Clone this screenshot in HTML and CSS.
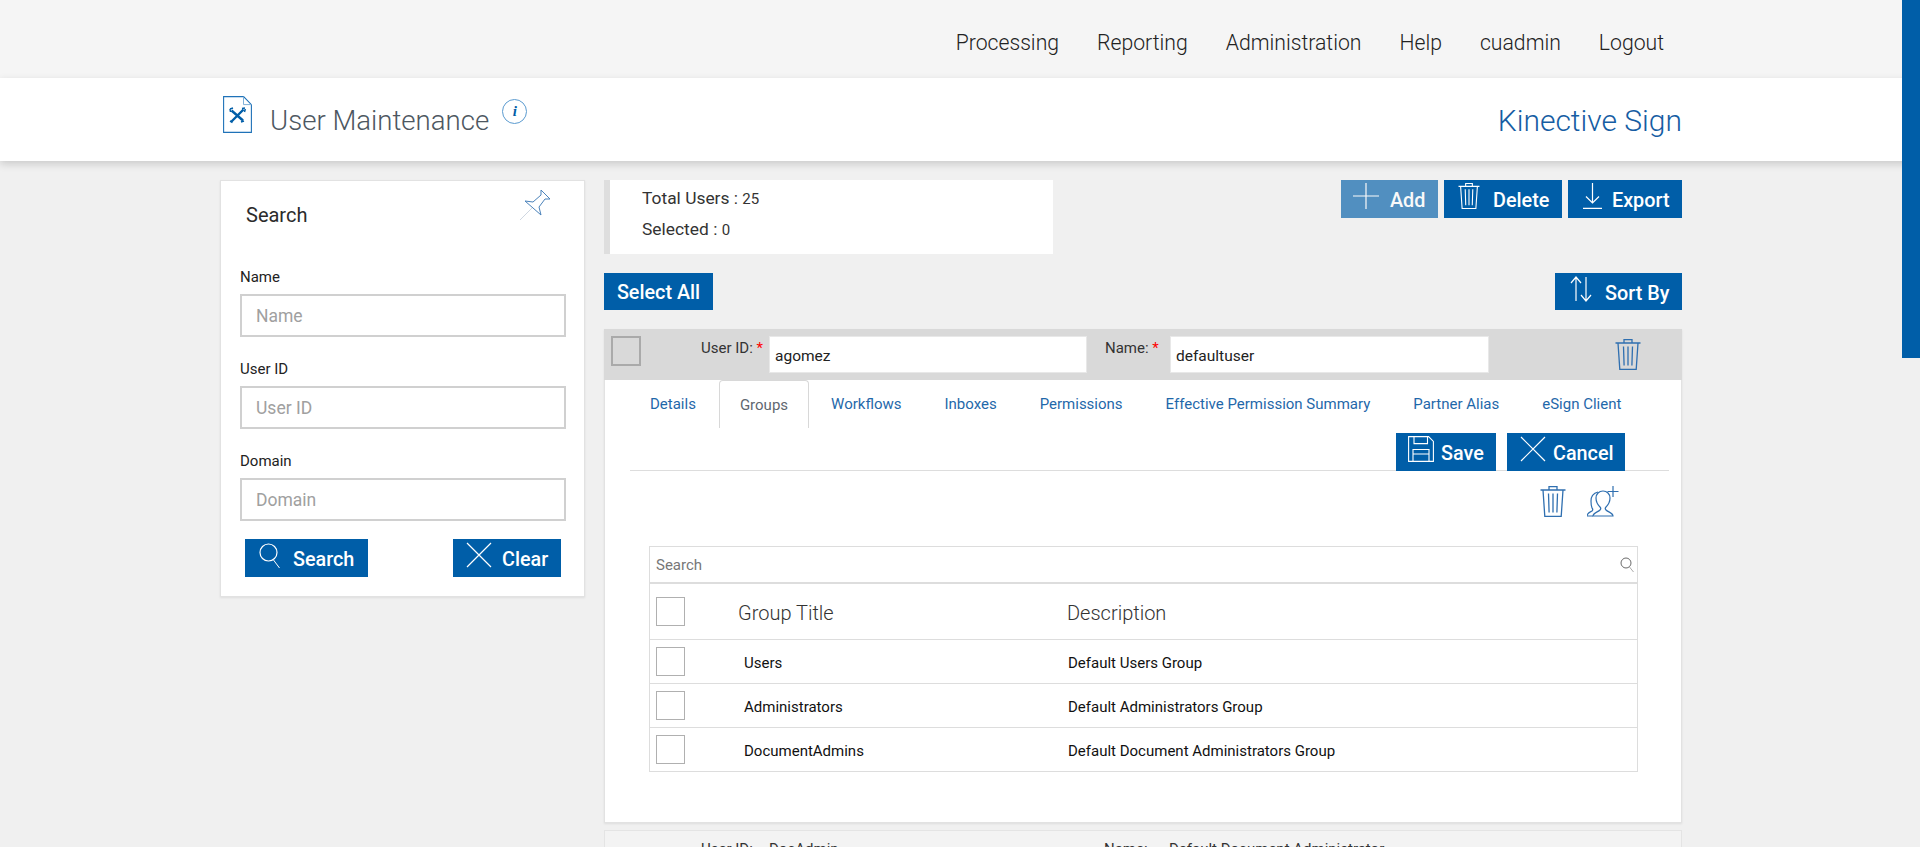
FILE: index.html
```html
<!DOCTYPE html>
<html lang="en">
<head>
<meta charset="utf-8">
<title>User Maintenance</title>
<link rel="stylesheet" href="styles.css">
</head>
<body>
<svg class="defs" width="0" height="0" aria-hidden="true">
  <symbol id="i-trash" viewBox="0 0 26 31"><path d="M.5 4h25M9 4V.6h8V4M3 4l1.800 26.400h16.400L23 4M8.500 7.500l.6 19M13 7.500v19M17.500 7.500l-.6 19" fill="none" stroke="currentColor" stroke-width="1.300"/></symbol>
  <symbol id="i-plus" viewBox="0 0 26 26"><path d="M13 0v26M0 13h26" fill="none" stroke="currentColor" stroke-width="1.200"/></symbol>
  <symbol id="i-x" viewBox="0 0 26 26"><path d="M1 1l24 24M25 1L1 25" fill="none" stroke="currentColor" stroke-width="1.200"/></symbol>
  <symbol id="i-export" viewBox="0 0 19 26"><path d="M9.500 0v20M3 13.500L9.500 20 16 13.500M0 25.400h19" fill="none" stroke="currentColor" stroke-width="1.200"/></symbol>
  <symbol id="i-sort" viewBox="0 0 22 26"><path d="M6 25V1M1 7l5-6 5 6M16 1v24M11 19l5 6 5-6" fill="none" stroke="currentColor" stroke-width="1.200"/></symbol>
  <symbol id="i-search" viewBox="0 0 21 25"><circle cx="9.500" cy="9.500" r="8.500" fill="none" stroke="currentColor" stroke-width="1.200"/><path d="M14.500 17l6 8" fill="none" stroke="currentColor" stroke-width="1"/></symbol>
  <symbol id="i-save" viewBox="0 0 26 26"><path d="M.6.600h20l4.800 4.800v20H.6zM6 .6v7h13.500v-7M5 25.400V13.500h16v11.900M5 18h16" fill="none" stroke="currentColor" stroke-width="1.100"/></symbol>
  <symbol id="i-pin" viewBox="0 0 32 32"><path d="M21 1l9 9h-5l-6 8 2 8L5 12l8 1 8-7z" fill="#fff" stroke="#4a82ba" stroke-width="1"/><path d="M12 19L0 31" fill="none" stroke="#c9d3de" stroke-width=".9"/></symbol>
  <symbol id="i-doc" viewBox="0 0 29 37"><path d="M.6.600h20l7.800 8v27.800H.6z" fill="#fff" stroke="#1f72b8" stroke-width="1.100"/><path d="M20.500.6v8h8" fill="none" stroke="#7fb0d8"/><path d="M8.500 14.500l11.500 10M20.500 13.500L8.500 25.500" fill="none" stroke="#005ea8" stroke-width="2.400"/><path d="M19 12.500l3-.5M21.500 16l.8-3M7 13l3-1M7 13l.5 3M7 25l2.500 1.500M18 26l3-1" fill="none" stroke="#005ea8" stroke-width="1.500"/></symbol>
  <symbol id="i-useradd" viewBox="0 0 32 31"><path d="M6 30c0-3 5-4 7-6 1-1 1-2 0-3-2-2-4-4-4-9 0-4 3-7 7-7s7 3 7 7c0 5-2 7-4 9-1 1-1 2 0 3 2 2 7 3 7 6z" fill="none" stroke="#2f6fb0" stroke-width="1.200"/><path d="M6 30H0c0-3 3-4 5-5 1-1 1-2 0-3-1-2-1-4-1-7 0-5 3-8 7-9" fill="none" stroke="#2f6fb0" stroke-width="1.200"/><path d="M26 0v11M20.500 5.500h11" fill="none" stroke="#2f6fb0" stroke-width="1.200"/></symbol>
  <symbol id="i-mag" viewBox="0 0 14 16"><circle cx="6" cy="6" r="5" fill="none" stroke="#6b6b6b"/><path d="M9.500 10l4 5" stroke="#aaa" fill="none"/></symbol>
</svg>

<header class="topnav">
  <nav class="topnav-links">
    <a>Processing</a><a>Reporting</a><a>Administration</a><a>Help</a><a>cuadmin</a><a>Logout</a>
  </nav>
</header>

<div class="titlebar">
  <div class="wrap titlebar-inner">
    <svg class="doc-icon"><use href="#i-doc"/></svg>
    <h1 class="page-title">User Maintenance</h1>
    <span class="info">i</span>
    <div class="brand">Kinective Sign</div>
  </div>
</div>

<main class="wrap content">
  <aside class="search-panel">
    <div class="search-head">
      <h2>Search</h2>
      <svg class="pin"><use href="#i-pin"/></svg>
    </div>
    <label class="field-label">Name</label>
    <input class="field" placeholder="Name">
    <label class="field-label">User ID</label>
    <input class="field" placeholder="User ID">
    <label class="field-label">Domain</label>
    <input class="field" placeholder="Domain">
    <div class="search-actions">
      <button class="btn btn-search"><svg class="ico ico-s"><use href="#i-search"/></svg>Search</button>
      <button class="btn btn-clear"><svg class="ico"><use href="#i-x"/></svg>Clear</button>
    </div>
  </aside>

  <section class="main-col">
    <div class="top-row">
      <div class="stats">
        <div class="stat">Total Users : <b>25</b></div>
        <div class="stat">Selected : <b>0</b></div>
      </div>
      <div class="actions">
        <button class="btn btn-add"><svg class="ico"><use href="#i-plus"/></svg>Add</button>
        <button class="btn btn-delete"><svg class="ico ico-t"><use href="#i-trash"/></svg>Delete</button>
        <button class="btn btn-export"><svg class="ico ico-e"><use href="#i-export"/></svg>Export</button>
      </div>
    </div>

    <div class="select-row">
      <button class="btn btn-plain">Select All</button>
      <button class="btn btn-sort"><svg class="ico ico-o"><use href="#i-sort"/></svg>Sort By</button>
    </div>

    <article class="user-card">
      <div class="user-head">
        <span class="box box-head"></span>
        <label class="uh-label uh-id">User ID: <em>*</em></label>
        <input class="uh-input uh-input-id" value="agomez">
        <label class="uh-label uh-name">Name: <em>*</em></label>
        <input class="uh-input uh-input-name" value="defaultuser">
        <svg class="head-trash"><use href="#i-trash"/></svg>
      </div>
      <div class="user-body">
        <ul class="tabs">
          <li>Details</li>
          <li class="active">Groups</li>
          <li>Workflows</li>
          <li>Inboxes</li>
          <li>Permissions</li>
          <li>Effective Permission Summary</li>
          <li>Partner Alias</li>
          <li>eSign Client</li>
        </ul>
        <div class="tab-actions">
          <button class="btn btn-save"><svg class="ico"><use href="#i-save"/></svg>Save</button>
          <button class="btn btn-cancel"><svg class="ico"><use href="#i-x"/></svg>Cancel</button>
        </div>
        <div class="tool-icons">
          <svg class="tool-trash"><use href="#i-trash"/></svg>
          <svg class="tool-user"><use href="#i-useradd"/></svg>
        </div>
        <div class="grid">
          <div class="grid-search">
            <span>Search</span>
            <svg class="mag"><use href="#i-mag"/></svg>
          </div>
          <div class="grid-row grid-header">
            <span class="box"></span><span class="col-a">Group Title</span><span class="col-b">Description</span>
          </div>
          <div class="grid-row">
            <span class="box"></span><span class="col-a">Users</span><span class="col-b">Default Users Group</span>
          </div>
          <div class="grid-row">
            <span class="box"></span><span class="col-a">Administrators</span><span class="col-b">Default Administrators Group</span>
          </div>
          <div class="grid-row">
            <span class="box"></span><span class="col-a">DocumentAdmins</span><span class="col-b">Default Document Administrators Group</span>
          </div>
        </div>
      </div>
    </article>

    <div class="user-next">
      <span class="next-a">User ID:</span><span class="next-b">DocAdmin</span>
      <span class="next-c">Name:</span><span class="next-d">Default Document Administrator</span>
    </div>
  </section>
</main>

<div class="scroll-thumb"></div>
</body>
</html>
```

FILE: styles.css
```css
* { box-sizing: border-box; }
html, body { margin: 0; height: 847px; overflow: hidden; }
body { background: #f0f0f0; font-family: Roboto, "Liberation Sans", sans-serif; color: #222; position: relative; }
.defs { position: absolute; }
.wrap { width: 1462px; margin-left: 220px; }

.topnav { height: 78px; background: #f5f5f5; display: flex; justify-content: flex-end; }
.topnav-links { display: flex; gap: 38px; margin-right: 256px; align-items: center; height: 84px; font-size: 21.2px; font-weight: 300; color: #222; }

.titlebar { height: 83px; background: #fff; box-shadow: 0 3px 8px rgba(0,0,0,.16); position: relative; }
.titlebar-inner { display: flex; align-items: flex-start; height: 83px; }
.doc-icon { width: 29px; height: 37px; margin: 18px 0 0 3px; flex: none; }
.page-title { margin: 27px 0 0 18px; font-size: 27.6px; line-height: 32px; font-weight: 300; color: #4d5761; }
.info { width: 25px; height: 25px; margin: 21px 0 0 13px; border: 1px solid #5b9bd0; border-radius: 50%; font: italic 700 15px/23px "Liberation Serif", serif; color: #005ea8; text-align: center; }
.brand { margin: 23px 0 0 auto; font-size: 30px; line-height: 40px; font-weight: 300; color: #165da3; }

.content { display: flex; gap: 19px; padding-top: 19px; align-items: flex-start; }

.search-panel { width: 365px; height: 417px; flex: none; background: #fff; border: 1px solid #e2e2e2; box-shadow: 0 1px 2px rgba(0,0,0,.08); padding: 0 18px 0 19px; }
.search-head { height: 87px; display: flex; justify-content: space-between; align-items: flex-start; }
.search-head h2 { margin: 22px 0 0 6px; font-size: 20px; line-height: 24px; font-weight: 400; color: #2b2b2b; }
.pin { width: 32px; height: 32px; margin: 8px 14px 0 0; }
.field-label { display: block; font-size: 15px; line-height: 18px; height: 26px; color: #222; }
.field { display: block; width: 326px; height: 43px; margin-bottom: 23px; padding: 0 14px; border: 2px solid #d0d0d0; background: #fff; font: 400 17.5px Roboto, sans-serif; color: #222; outline: 0; }
.field::placeholder { color: #a0a0a0; opacity: 1; }
.search-actions { display: flex; justify-content: space-between; margin: -5px 5px 0; }

.btn { display: inline-flex; align-items: center; height: 38px; padding: 3px 0 0; border: 0; background: #005ea8; color: #fff; font: 500 19.8px Roboto, sans-serif; white-space: nowrap; }
.ico { width: 26px; height: 26px; flex: none; margin: -9px 0 0 0; }
.ico-s { width: 21px; height: 25px; }
.ico-t { width: 22px; height: 26px; }
.ico-e { width: 19px; height: 26px; }
.ico-o { width: 22px; height: 26px; }
.btn-search { width: 123px; padding-left: 14px; gap: 13px; }
.btn-clear { width: 108px; padding-left: 13px; gap: 10px; }
.btn-add { width: 97px; padding-left: 12px; gap: 11px; opacity: .66; }
.btn-delete { width: 118px; padding-left: 14px; gap: 13px; }
.btn-export { width: 114px; padding-left: 15px; gap: 10px; }
.btn-plain { width: 109px; height: 37px; justify-content: center; padding-top: 1px; }
.btn-sort { width: 127px; height: 37px; padding-left: 15px; gap: 13px; }
.btn-save { width: 100px; padding-left: 12px; gap: 7px; }
.btn-cancel { width: 118px; padding-left: 13px; gap: 7px; }

.main-col { width: 1078px; flex: none; }
.top-row { display: flex; justify-content: space-between; height: 74px; }
.stats { width: 449px; background: #fff; border-left: 6px solid #dedede; padding: 3px 0 0 32px; }
.stat { font-size: 17.4px; line-height: 30px; color: #333; }
.stat b { font-size: 15px; font-weight: 400; }
.actions { display: flex; gap: 6px; align-items: flex-start; }
.select-row { display: flex; justify-content: space-between; margin: 19px 0; }

.user-card { height: 494px; border: 1px solid #e2e2e2; border-top: 0; background: #fff; box-shadow: 0 1px 2px rgba(0,0,0,.08); }
.user-head { height: 51px; margin: 0 -1px; background: #d9d9d9; display: flex; align-items: flex-start; }
.box { display: block; width: 29px; height: 29px; flex: none; border: 1px solid #b0b0b0; background: #fff; }
.box-head { width: 30px; height: 30px; background: #d9d9d9; margin: 7px 0 0 7px; border-width: 2px; border-color: #aaa; }
.uh-label { font-size: 15px; line-height: 18px; margin-top: 10px; color: #333; }
.uh-label em { color: #f00; font-style: normal; }
.uh-id { width: 70px; margin-left: 60px; white-space: nowrap; }
.uh-name { width: 66px; margin-left: 18px; white-space: nowrap; }
.uh-input { height: 37px; margin-top: 7px; padding: 2px 5px 0; border: 1px solid #e8e8e8; background: #fff; font: 400 15.5px Roboto, sans-serif; color: #222; outline: 0; }
.uh-input-id { width: 318px; margin-left: -2px; }
.uh-input-name { width: 319px; margin-left: -1px; }
.head-trash { width: 26px; height: 31px; margin: 10px 0 0 126px; color: #2f6fb0; }

.tabs { list-style: none; display: flex; margin: 0; padding: 0 0 0 24px; height: 48px; font-size: 15px; color: #1f68aa; }
.tabs li { padding: 0 20px; line-height: 49px; margin-right: 1px; border: 1px solid transparent; border-top: 0; border-bottom: 0; white-space: nowrap; }
.tabs li:first-child { padding-right: 21px; }
.tabs li.active { color: #5f6770; border-color: #d8d8d8; border-top: 1px solid #d8d8d8; border-radius: 4px 4px 0 0; line-height: 48px; }
.tab-actions { margin: 5px 0 0 25px; width: 1039px; height: 38px; border-bottom: 1px solid #ddd; display: flex; justify-content: flex-end; gap: 11px; padding-right: 44px; }
.tool-icons { height: 75px; padding: 15px 0 0 935px; display: flex; align-items: flex-start; gap: 21px; color: #2f6fb0; }
.tool-trash { width: 26px; height: 31px; flex: none; }
.tool-user { width: 32px; height: 31px; flex: none; }

.grid { margin-left: 44px; width: 989px; border: 1px solid #ddd; }
.grid-search { height: 37px; display: flex; align-items: center; justify-content: space-between; padding: 0 3px 0 6px; border-bottom: 2px solid #ddd; font-size: 15px; color: #777; }
.mag { width: 14px; height: 16px; }
.grid-row { height: 44px; display: flex; align-items: center; padding-left: 6px; border-bottom: 1px solid #ddd; font-size: 15px; color: #111; }
.grid-row:last-child { height: 43px; border-bottom: 0; }
.grid-row .col-a, .grid-row .col-b { padding-top: 2px; }
.grid-header { height: 56px; font-size: 20px; font-weight: 300; color: #333; }
.col-a { width: 324px; margin-left: 59px; }
.grid-header .col-a { margin-left: 53px; width: 329px; }
.col-b { flex: 1; }

.user-next { height: 40px; margin-top: 7px; border: 1px solid #e4e4e4; background: #f3f3f3; font-size: 15px; line-height: 18px; color: #333; padding-top: 9px; display: flex; }
.next-a { margin-left: 96px; width: 68px; }
.next-b { width: 335px; }
.next-c { width: 65px; }

.scroll-thumb { position: fixed; top: 0; right: 0; width: 18px; height: 358px; background: #005ea8; }
```
